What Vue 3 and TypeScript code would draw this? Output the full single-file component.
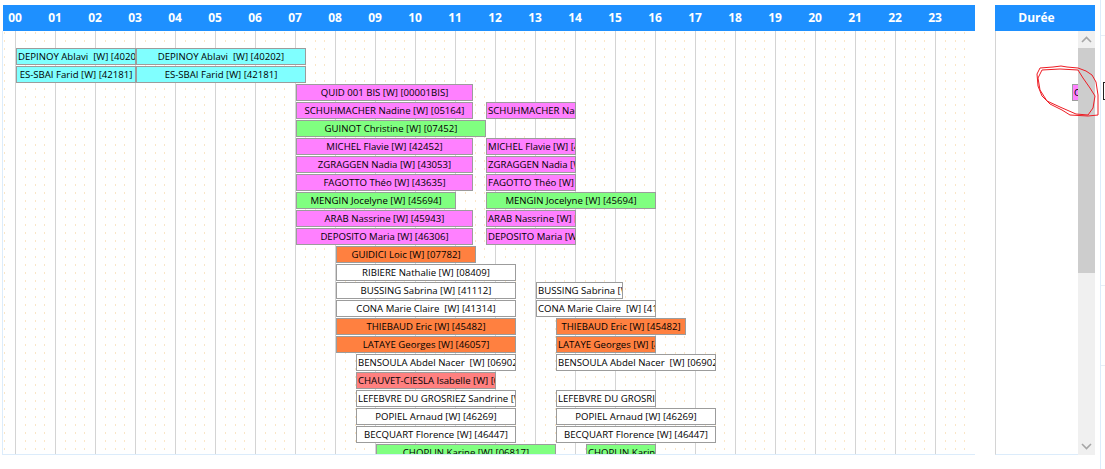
<script setup lang="ts">
type Kind = 'cyan' | 'pink' | 'green' | 'orange' | 'red' | 'white'

interface Bar {
  row: number
  from: number
  to: number
  label: string
  kind: Kind
}

const hours = Array.from({ length: 24 }, (_, i) => String(i).padStart(2, '0'))
const rowHeight = 18

function twin(row: number, label: string, kind: Kind, a: number, b: number, c?: number, d?: number): Bar[] {
  const list: Bar[] = [{ row, from: a, to: b, label, kind }]
  if (c !== undefined && d !== undefined) list.push({ row, from: c, to: d, label, kind })
  return list
}

const bars: Bar[] = [
  ...twin(0, 'DEPINOY Ablavi  [W] [40202]', 'cyan', 16, 136, 136, 306),
  ...twin(1, 'ES-SBAI Farid [W] [42181]', 'cyan', 16, 136, 136, 306),
  ...twin(2, 'QUID 001 BIS [W] [00001BIS]', 'pink', 296, 473),
  ...twin(3, 'SCHUHMACHER Nadine [W] [05164]', 'pink', 296, 473, 486, 576),
  ...twin(4, 'GUINOT Christine [W] [07452]', 'green', 296, 486),
  ...twin(5, 'MICHEL Flavie [W] [42452]', 'pink', 296, 473, 486, 576),
  ...twin(6, 'ZGRAGGEN Nadia [W] [43053]', 'pink', 296, 473, 486, 576),
  ...twin(7, 'FAGOTTO Théo [W] [43635]', 'pink', 296, 473, 486, 576),
  ...twin(8, 'MENGIN Jocelyne [W] [45694]', 'green', 296, 456, 486, 656),
  ...twin(9, 'ARAB Nassrine [W] [45943]', 'pink', 296, 473, 486, 576),
  ...twin(10, 'DEPOSITO Maria [W] [46306]', 'pink', 296, 473, 486, 576),
  ...twin(11, 'GUIDICI Loic [W] [07782]', 'orange', 336, 476),
  ...twin(12, 'RIBIERE Nathalie [W] [08409]', 'white', 336, 516),
  ...twin(13, 'BUSSING Sabrina [W] [41112]', 'white', 336, 516, 536, 623),
  ...twin(14, 'CONA Marie Claire  [W] [41314]', 'white', 336, 516, 536, 656),
  ...twin(15, 'THIEBAUD Eric [W] [45482]', 'orange', 336, 516, 556, 686),
  ...twin(16, 'LATAYE Georges [W] [46057]', 'orange', 336, 516, 556, 656),
  ...twin(17, 'BENSOULA Abdel Nacer  [W] [06902]', 'white', 356, 516, 556, 716),
  ...twin(18, 'CHAUVET-CIESLA Isabelle [W] [07100]', 'red', 356, 496),
  ...twin(19, 'LEFEBVRE DU GROSRIEZ Sandrine [W] [46101]', 'white', 356, 516, 556, 656),
  ...twin(20, 'POPIEL Arnaud [W] [46269]', 'white', 356, 516, 556, 716),
  ...twin(21, 'BECQUART Florence [W] [46447]', 'white', 356, 516, 556, 716),
  ...twin(22, 'CHOPLIN Karine [W] [06817]', 'green', 376, 556, 586, 656),
]

// the chart body starts at x=3, y=31 in the page
function barStyle(b: Bar) {
  return {
    left: b.from - 3 + 'px',
    top: 48 - 31 + b.row * rowHeight + 'px',
    width: b.to - b.from + 'px',
  }
}
</script>

<template>
  <div class="page">
    <div class="frame">
      <section class="chart">
        <header class="head hours">
          <span v-for="h in hours" :key="h" class="hour">{{ h }}</span>
        </header>
        <div class="body">
          <svg class="grid" width="972" height="424" aria-hidden="true">
            <defs>
              <pattern id="cell" width="40" height="8" patternUnits="userSpaceOnUse" patternTransform="translate(12 1)">
                <rect x="0" y="0" width="1" height="8" fill="#d4d4d4" />
                <rect x="10" y="0" width="1" height="2" fill="#fbe6c6" />
                <rect x="20" y="0" width="1" height="2" fill="#fbe6c6" />
                <rect x="29" y="0" width="1" height="2" fill="#fbe6c6" />
              </pattern>
            </defs>
            <rect width="972" height="424" fill="url(#cell)" />
          </svg>
          <div
            v-for="(b, i) in bars"
            :key="i"
            class="bar"
            :class="b.kind"
            :style="barStyle(b)"
          >{{ b.label }}</div>
        </div>
      </section>

      <section class="side">
        <header class="head duree">Durée</header>
        <div class="side-body">
          <div class="side-content">
            <div class="bar pink stub">CHOPIN</div>
          </div>
          <div class="scrollbar">
            <button class="arrow" aria-label="Monter">
              <svg width="11" height="7" viewBox="0 0 11 7"><path d="M1 6 L5.5 1.5 L10 6" fill="none" stroke="#a6a6a6" stroke-width="1.6" /></svg>
            </button>
            <div class="thumb"></div>
            <button class="arrow down" aria-label="Descendre">
              <svg width="11" height="7" viewBox="0 0 11 7"><path d="M1 1 L5.5 5.5 L10 1" fill="none" stroke="#a6a6a6" stroke-width="1.6" /></svg>
            </button>
          </div>
        </div>
      </section>
    </div>

    <div class="edge"></div>
    <div class="tick" style="top: 35px"></div>
    <div class="tick" style="top: 285px"></div>
    <div class="tick" style="top: 365px"></div>
    <div class="bracket"></div>

    <svg class="scribble" width="1105" height="469" aria-hidden="true">
      <path d="M1040 68 L1053 67 L1061 66 L1067 67 L1078 68 L1086 71 L1092 75 L1096 82 L1098 95 L1098 115 L1088 116 L1070 115 L1062 110 L1050 104 L1042 96 L1038 86 L1037 74 Z" fill="none" stroke="#ee1c24" stroke-width="1" />
      <path d="M1042 70 L1060 69 L1078 70 L1083 78 L1090 88 L1095 96 L1093 108 L1088 115 L1076 114 L1060 107 L1047 101 L1040 90 L1038 78 Z" fill="none" stroke="#ee1c24" stroke-width="1" />
    </svg>
  </div>
</template>

<style scoped>
.page {
  position: relative;
  width: 1105px;
  height: 469px;
  overflow: hidden;
  background: #ffffff;
  font-family: "Open Sans", "Liberation Sans", sans-serif;
}

.frame {
  display: flex;
  gap: 20px;
  box-sizing: border-box;
  width: 1096px;
  height: 455px;
  margin: 5px 0 0 3px;
}

.head {
  height: 26px;
  background: #1e90ff;
  color: #ffffff;
  font-size: 12px;
  font-weight: 700;
  line-height: 26px;
  flex: none;
}

.chart {
  width: 972px;
  display: flex;
  flex-direction: column;
}

.hours {
  display: flex;
}

.hour {
  flex: none;
  width: 40px;
  text-align: center;
}

.hour:first-child {
  margin-left: -8px;
}

.body {
  position: relative;
  height: 424px;
  overflow: hidden;
  border-bottom: 1px solid #dcecfb;
  box-sizing: border-box;
  box-shadow: -1px 0 0 #dcecfb;
}

.grid {
  position: absolute;
  left: 0;
  top: 0;
}

.bar {
  position: absolute;
  box-sizing: border-box;
  height: 17px;
  border: 1px solid #9c9c9c;
  padding: 0 1px;
  overflow: hidden;
  white-space: pre;
  text-align: center;
  font-size: 9.6px;
  line-height: 15px;
  color: #000000;
}

.cyan { background: #80ffff; }
.pink { background: #ff80ff; }
.green { background: #80ff80; }
.orange { background: #ff8040; }
.red { background: #ff8080; }
.white { background: #ffffff; }

.side {
  flex: none;
  width: 100px;
  display: flex;
  flex-direction: column;
}

.duree {
  text-align: center;
  padding-right: 17px;
}

.side-body {
  display: flex;
  height: 424px;
}

.side-content {
  position: relative;
  flex: 1;
  overflow: hidden;
  border-left: 1px solid #d4d4d4;
  border-bottom: 1px solid #dcecfb;
}

.stub {
  left: 76px;
  top: 53px;
  width: 30px;
  text-align: left;
}

.scrollbar {
  flex: none;
  width: 17px;
  display: flex;
  flex-direction: column;
  background: #f0f0f0;
}

.arrow {
  flex: none;
  height: 17px;
  padding: 0;
  border: 0;
  background: #f0f0f0;
  display: flex;
  align-items: center;
  justify-content: center;
}

.arrow.down {
  margin-top: auto;
}

.thumb {
  flex: none;
  height: 225px;
  background: #cdcdcd;
}

.edge {
  position: absolute;
  left: 1100px;
  top: 0;
  width: 1px;
  height: 469px;
  background: #dcecfb;
}

.tick {
  position: absolute;
  left: 1101px;
  width: 4px;
  height: 1px;
  background: #e6eef6;
}

.bracket {
  position: absolute;
  left: 1103px;
  top: 82px;
  width: 8px;
  height: 16px;
  border: 1px solid #222222;
}

.scribble {
  position: absolute;
  left: 0;
  top: 0;
  pointer-events: none;
}
</style>
